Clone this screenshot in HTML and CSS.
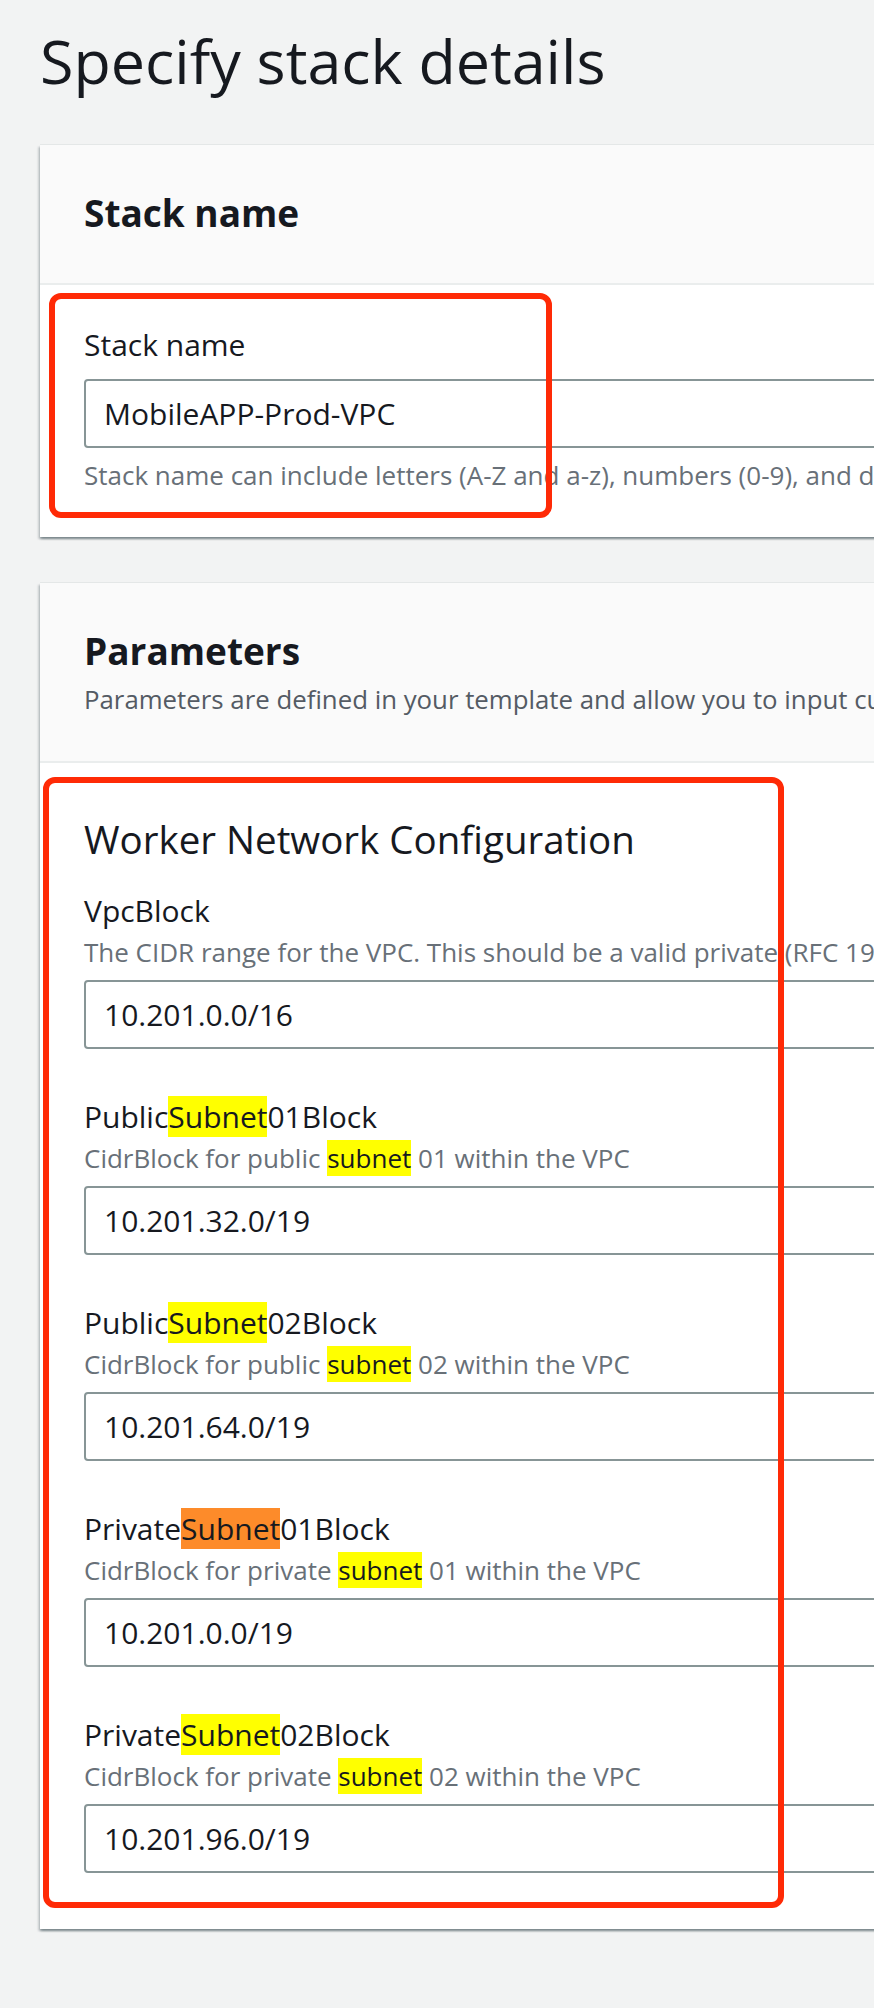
FILE: index.html
```html
<!DOCTYPE html>
<html lang="en">
<head>
<meta charset="utf-8">
<title>Specify stack details</title>
<link rel="stylesheet" href="styles.css">
</head>
<body>
<main class="page">
  <h1 class="title">Specify stack details</h1>

  <section class="card">
    <header class="card-header">
      <h2 class="card-title">Stack name</h2>
    </header>
    <div class="card-body">
      <div class="field">
        <label class="label">Stack name</label>
        <div class="input">MobileAPP-Prod-VPC</div>
        <p class="constraint">Stack name can include letters (A-Z and a-z), numbers (0-9), and dashes (-).</p>
      </div>
      <div class="annot annot-stack"></div>
    </div>
  </section>

  <section class="card card-params">
    <header class="card-header">
      <h2 class="card-title">Parameters</h2>
      <p class="card-desc">Parameters are defined in your template and allow you to input custom values when you create or update a stack.</p>
    </header>
    <div class="card-body card-body-params">
      <h3 class="group-title">Worker Network Configuration</h3>
      <div class="fields">
        <div class="param">
          <div class="label">VpcBlock</div>
          <div class="desc">The CIDR range for the VPC. This should be a valid private (RFC 1918) CIDR range.</div>
          <div class="input">10.201.0.0/16</div>
        </div>
        <div class="param">
          <div class="label">Public<span class="hl">Subnet</span>01Block</div>
          <div class="desc">CidrBlock for public <span class="hl">subnet</span> 01 within the VPC</div>
          <div class="input">10.201.32.0/19</div>
        </div>
        <div class="param">
          <div class="label">Public<span class="hl">Subnet</span>02Block</div>
          <div class="desc">CidrBlock for public <span class="hl">subnet</span> 02 within the VPC</div>
          <div class="input">10.201.64.0/19</div>
        </div>
        <div class="param">
          <div class="label">Private<span class="hl hl-current">Subnet</span>01Block</div>
          <div class="desc">CidrBlock for private <span class="hl">subnet</span> 01 within the VPC</div>
          <div class="input">10.201.0.0/19</div>
        </div>
        <div class="param">
          <div class="label">Private<span class="hl">Subnet</span>02Block</div>
          <div class="desc">CidrBlock for private <span class="hl">subnet</span> 02 within the VPC</div>
          <div class="input">10.201.96.0/19</div>
        </div>
      </div>
      <div class="annot annot-params"></div>
    </div>
  </section>
</main>
</body>
</html>
```

FILE: styles.css
```css
html, body {
  margin: 0;
  padding: 0;
  overflow: hidden;
  background: #f2f3f3;
}

body {
  font-family: "Open Sans", "Noto Sans", sans-serif;
  color: #16191f;
  white-space: nowrap;
}

.page {
  width: 1600px;
  padding: 24px 0 60px 40px;
}

.title {
  margin: 0 0 47px 0;
  font-size: 61px;
  line-height: 74px;
  font-weight: 400;
  color: #16191f;
}

.card {
  width: 1500px;
  background: #ffffff;
  box-shadow:
    0 -1px 0 0 #e4e7e7,
    0 2px 2px 0 rgba(0, 28, 36, 0.3),
    2px 2px 2px 0 rgba(0, 28, 36, 0.15),
    -2px 2px 2px 0 rgba(0, 28, 36, 0.15);
}

.card-params {
  margin-top: 46px;
}

.card-header {
  background: #fafafa;
  border-bottom: 2px solid #eaeded;
  padding: 46px 44px 48px 44px;
}

.card-params .card-header {
  padding-bottom: 46px;
}

.card-title {
  margin: 0;
  font-size: 37px;
  line-height: 44px;
  font-weight: 700;
  color: #16191f;
}

.card-desc {
  margin: 10px 0 0;
  font-size: 25.8px;
  line-height: 32px;
  color: #545b64;
}

.card-body {
  position: relative;
  padding: 42px 44px 46px 44px;
}

.card-body-params {
  padding-top: 54px;
  padding-bottom: 56px;
}

.label {
  display: block;
  font-size: 30px;
  line-height: 36px;
  color: #16191f;
}

.input {
  height: 65px;
  line-height: 65px;
  border: 2px solid #879596;
  border-radius: 4px;
  padding: 0 18px;
  font-size: 30px;
  color: #16191f;
  background: #ffffff;
}

.field .input {
  margin-top: 16px;
}

.constraint {
  margin: 11px 0 0;
  font-size: 26px;
  line-height: 32px;
  color: #687078;
}

.group-title {
  margin: 0;
  font-size: 38.5px;
  line-height: 44px;
  font-weight: 400;
  color: #16191f;
}

.fields {
  display: flex;
  flex-direction: column;
  gap: 50px;
  margin-top: 32px;
}

.desc {
  margin-top: 7px;
  font-size: 26px;
  line-height: 32px;
  color: #687078;
}

.param .input {
  margin-top: 12px;
}

.hl {
  background: #ffff00;
  color: #16191f;
}

.hl-current {
  background: #fd8b2a;
}

.annot {
  position: absolute;
  border: 6px solid #ff2a06;
  border-radius: 12px;
  box-sizing: border-box;
  pointer-events: none;
}

.annot-stack {
  top: 8px;
  left: 9px;
  width: 503px;
  height: 225px;
}

.annot-params {
  top: 14px;
  left: 3px;
  width: 741px;
  height: 1131px;
}
```
